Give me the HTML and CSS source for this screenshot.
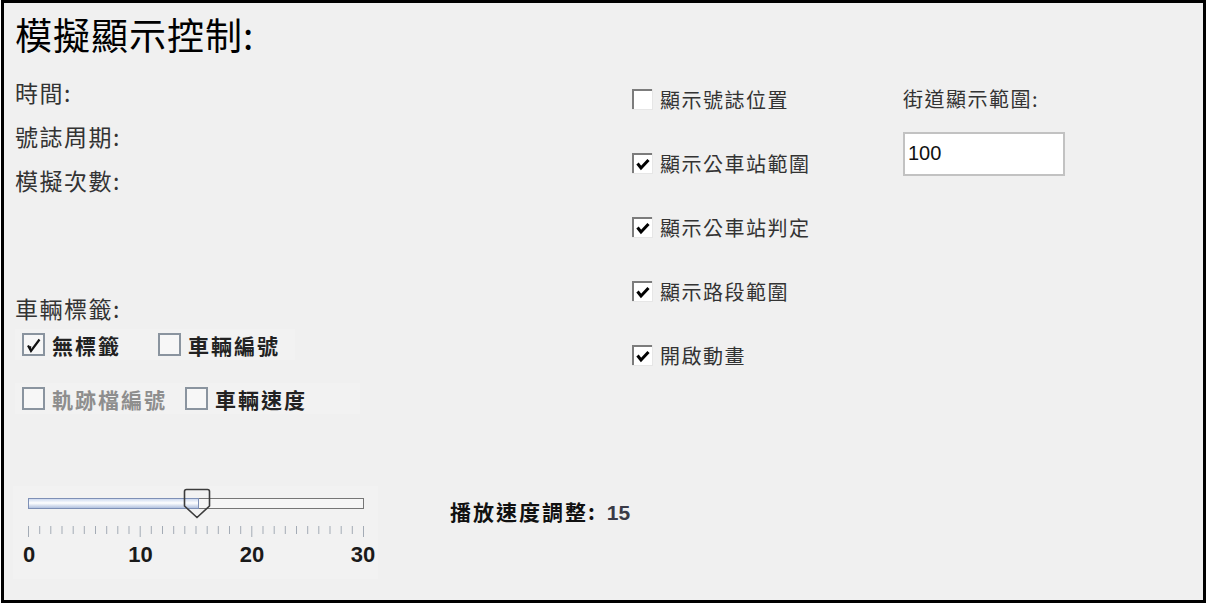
FILE: index.html
```html
<!DOCTYPE html>
<html lang="zh-Hant">
<head>
<meta charset="utf-8">
<title>模擬顯示控制</title>
<link rel="stylesheet" href="styles.css">
</head>
<body>
<div class="frame">
  <h1 class="title">模擬顯示控制:</h1>
  <div class="main">
    <div class="col-left">
      <div class="info">
        <div class="label">時間:</div>
        <div class="label">號誌周期:</div>
        <div class="label">模擬次數:</div>
      </div>
      <div class="label group-label">車輛標籤:</div>
      <div class="tag-row row1">
        <div class="tag w1">
          <svg class="box" viewBox="0 0 23 23"><rect x="1" y="1" width="21" height="21" fill="#f7f7f7" stroke="#8a949f" stroke-width="2"/><path d="M6 12.5 L9 18 L17.5 6.5" fill="none" stroke="#111" stroke-width="2.2"/><path d="M6 14 L9.2 13 L9 18 Z" fill="#111"/></svg>
          <span class="tag-text">無標籤</span>
        </div>
        <div class="tag w2">
          <svg class="box" viewBox="0 0 23 23"><rect x="1" y="1" width="21" height="21" fill="#f7f7f7" stroke="#8a949f" stroke-width="2"/></svg>
          <span class="tag-text">車輛編號</span>
        </div>
      </div>
      <div class="tag-row row2">
        <div class="tag w3">
          <svg class="box" viewBox="0 0 23 23"><rect x="1" y="1" width="21" height="21" fill="#f7f7f7" stroke="#8a949f" stroke-width="2"/></svg>
          <span class="tag-text disabled">軌跡檔編號</span>
        </div>
        <div class="tag w4">
          <svg class="box" viewBox="0 0 23 23"><rect x="1" y="1" width="21" height="21" fill="#f7f7f7" stroke="#8a949f" stroke-width="2"/></svg>
          <span class="tag-text">車輛速度</span>
        </div>
      </div>
      <div class="slider-row">
        <svg class="slider" width="365" height="93" viewBox="0 0 365 93">
          <defs>
            <linearGradient id="fill" x1="0" y1="0" x2="0" y2="1">
              <stop offset="0" stop-color="#c9d6ee"/>
              <stop offset="0.45" stop-color="#ffffff"/>
              <stop offset="1" stop-color="#a9bbdc"/>
            </linearGradient>
          </defs>
          <rect x="15.5" y="12.5" width="335" height="10" fill="#f6f6f6" stroke="#767676"/>
          <rect x="15.5" y="12.5" width="170" height="10" fill="url(#fill)" stroke="#7e90b6"/>
          <path d="M173.5 3.5 H194.5 Q196.5 3.5 196.5 5.5 V20 L184 31.5 L171.5 20 V5.5 Q171.5 3.5 173.5 3.5 Z" fill="none" stroke="#3c3c3c" stroke-width="1.6"/>
          <g stroke="#a3abb5" stroke-width="1">
            <line x1="15.5" y1="40" x2="15.5" y2="51"/>
            <line x1="26.7" y1="40" x2="26.7" y2="48"/>
            <line x1="37.8" y1="40" x2="37.8" y2="48"/>
            <line x1="49" y1="40" x2="49" y2="48"/>
            <line x1="60.2" y1="40" x2="60.2" y2="48"/>
            <line x1="71.3" y1="40" x2="71.3" y2="48"/>
            <line x1="82.5" y1="40" x2="82.5" y2="48"/>
            <line x1="93.7" y1="40" x2="93.7" y2="48"/>
            <line x1="104.8" y1="40" x2="104.8" y2="48"/>
            <line x1="116" y1="40" x2="116" y2="48"/>
            <line x1="127.2" y1="40" x2="127.2" y2="51"/>
            <line x1="138.3" y1="40" x2="138.3" y2="48"/>
            <line x1="149.5" y1="40" x2="149.5" y2="48"/>
            <line x1="160.7" y1="40" x2="160.7" y2="48"/>
            <line x1="171.8" y1="40" x2="171.8" y2="48"/>
            <line x1="183" y1="40" x2="183" y2="48"/>
            <line x1="194.2" y1="40" x2="194.2" y2="48"/>
            <line x1="205.3" y1="40" x2="205.3" y2="48"/>
            <line x1="216.5" y1="40" x2="216.5" y2="48"/>
            <line x1="227.7" y1="40" x2="227.7" y2="48"/>
            <line x1="238.8" y1="40" x2="238.8" y2="51"/>
            <line x1="250" y1="40" x2="250" y2="48"/>
            <line x1="261.2" y1="40" x2="261.2" y2="48"/>
            <line x1="272.3" y1="40" x2="272.3" y2="48"/>
            <line x1="283.5" y1="40" x2="283.5" y2="48"/>
            <line x1="294.7" y1="40" x2="294.7" y2="48"/>
            <line x1="305.8" y1="40" x2="305.8" y2="48"/>
            <line x1="317" y1="40" x2="317" y2="48"/>
            <line x1="328.2" y1="40" x2="328.2" y2="48"/>
            <line x1="339.3" y1="40" x2="339.3" y2="48"/>
            <line x1="350.5" y1="40" x2="350.5" y2="51"/>
          </g>
          <g class="ticklabels" text-anchor="middle">
            <text x="16" y="76">0</text>
            <text x="127.5" y="76">10</text>
            <text x="239" y="76">20</text>
            <text x="350" y="76">30</text>
          </g>
        </svg>
        <div class="speed"><span class="speed-label">播放速度調整:</span><span class="speed-value">15</span></div>
      </div>
    </div>
    <div class="col-mid">
      <div class="opt">
        <svg class="cb" viewBox="0 0 21 21"><rect width="21" height="21" fill="#fff"/><path d="M0 0H21V2H2V21H0Z" fill="#7c7c7c"/><path d="M21 0V21H0V20H20V0Z" fill="#e6e6e6"/></svg>
        <span>顯示號誌位置</span>
      </div>
      <div class="opt">
        <svg class="cb" viewBox="0 0 21 21"><rect width="21" height="21" fill="#fff"/><path d="M0 0H21V2H2V21H0Z" fill="#7c7c7c"/><path d="M21 0V21H0V20H20V0Z" fill="#e6e6e6"/><path d="M5.5 10.5 L9 15 L16.5 7" fill="none" stroke="#000" stroke-width="3"/></svg>
        <span>顯示公車站範圍</span>
      </div>
      <div class="opt">
        <svg class="cb" viewBox="0 0 21 21"><rect width="21" height="21" fill="#fff"/><path d="M0 0H21V2H2V21H0Z" fill="#7c7c7c"/><path d="M21 0V21H0V20H20V0Z" fill="#e6e6e6"/><path d="M5.5 10.5 L9 15 L16.5 7" fill="none" stroke="#000" stroke-width="3"/></svg>
        <span>顯示公車站判定</span>
      </div>
      <div class="opt">
        <svg class="cb" viewBox="0 0 21 21"><rect width="21" height="21" fill="#fff"/><path d="M0 0H21V2H2V21H0Z" fill="#7c7c7c"/><path d="M21 0V21H0V20H20V0Z" fill="#e6e6e6"/><path d="M5.5 10.5 L9 15 L16.5 7" fill="none" stroke="#000" stroke-width="3"/></svg>
        <span>顯示路段範圍</span>
      </div>
      <div class="opt">
        <svg class="cb" viewBox="0 0 21 21"><rect width="21" height="21" fill="#fff"/><path d="M0 0H21V2H2V21H0Z" fill="#7c7c7c"/><path d="M21 0V21H0V20H20V0Z" fill="#e6e6e6"/><path d="M5.5 10.5 L9 15 L16.5 7" fill="none" stroke="#000" stroke-width="3"/></svg>
        <span>開啟動畫</span>
      </div>
    </div>
    <div class="col-right">
      <div class="range-label">街道顯示範圍:</div>
      <input class="range-input" type="text" value="100">
    </div>
  </div>
</div>
</body>
</html>
```

FILE: styles.css
```css
* { box-sizing: border-box; }

body {
  margin: 0;
  background: #ffffff;
  font-family: "Noto Sans CJK TC", "Noto Sans", sans-serif;
}

.frame {
  width: 1205px;
  height: 603px;
  margin-left: 1px;
  border: 3px solid #000;
  background: #f0f0f0;
  padding: 9px 0 0 11px;
}

.title {
  margin: 0;
  font-size: 37px;
  line-height: 44px;
  font-weight: 400;
  letter-spacing: 1px;
  color: #000;
  height: 44px;
}

.main {
  display: flex;
  align-items: flex-start;
}

.col-left {
  width: 616px;
  display: flex;
  flex-direction: column;
  align-items: flex-start;
}

.info {
  margin-top: 21px;
  display: flex;
  flex-direction: column;
  gap: 14px;
}

.label {
  font-size: 23px;
  line-height: 30px;
  letter-spacing: 1.5px;
  color: #333;
}

.group-label {
  margin-top: 98px;
}

.tag-row {
  display: flex;
  height: 31px;
  background: #f2f2f2;
}

.row1 { margin-top: 6px; }
.row2 { margin-top: 23px; }

.tag {
  display: flex;
  align-items: center;
  gap: 7px;
  padding-left: 7px;
}

.w1 { width: 136px; }
.w2 { width: 144px; }
.w3 { width: 163px; }
.w4 { width: 182px; }

.box {
  width: 23px;
  height: 23px;
  flex: none;
}

.tag-text {
  font-size: 21px;
  line-height: 30px;
  font-weight: 700;
  letter-spacing: 2px;
  color: #222;
}

.tag-text.disabled {
  color: #8e8e8e;
}

.slider-row {
  margin-top: 72px;
  margin-left: -2px;
  display: flex;
  align-items: flex-start;
}

.slider {
  display: block;
  background: #f2f2f2;
  flex: none;
}

.ticklabels {
  font-family: "Liberation Sans", Arial, sans-serif;
  font-weight: 700;
  font-size: 22px;
  fill: #1a1a1a;
}

.speed {
  margin-left: 72px;
  margin-top: 10px;
  line-height: 30px;
  white-space: nowrap;
}

.speed-label {
  font-size: 21px;
  font-weight: 700;
  letter-spacing: 2px;
  color: #111;
}

.speed-value {
  margin-left: 10px;
  font-family: "Liberation Sans", Arial, sans-serif;
  font-size: 21px;
  font-weight: 700;
  color: #3a3a46;
}

.col-mid {
  width: 272px;
  margin-top: 28px;
  padding-left: 1px;
  display: flex;
  flex-direction: column;
  gap: 34px;
}

.opt {
  display: flex;
  align-items: center;
  gap: 7px;
  height: 30px;
  font-size: 20px;
  letter-spacing: 1.5px;
  color: #333;
}

.cb {
  width: 21px;
  height: 21px;
  flex: none;
}

.col-right {
  margin-top: 28px;
  display: flex;
  flex-direction: column;
  align-items: flex-start;
}

.range-label {
  font-size: 20px;
  line-height: 30px;
  letter-spacing: 1.5px;
  color: #333;
}

.range-input {
  margin-top: 18px;
  width: 162px;
  height: 44px;
  border: 2px solid #c2c2c2;
  background: #fff;
  padding: 0 0 2px 3px;
  font-family: "Liberation Sans", Arial, sans-serif;
  font-size: 20px;
  color: #111;
  outline: none;
}
```
